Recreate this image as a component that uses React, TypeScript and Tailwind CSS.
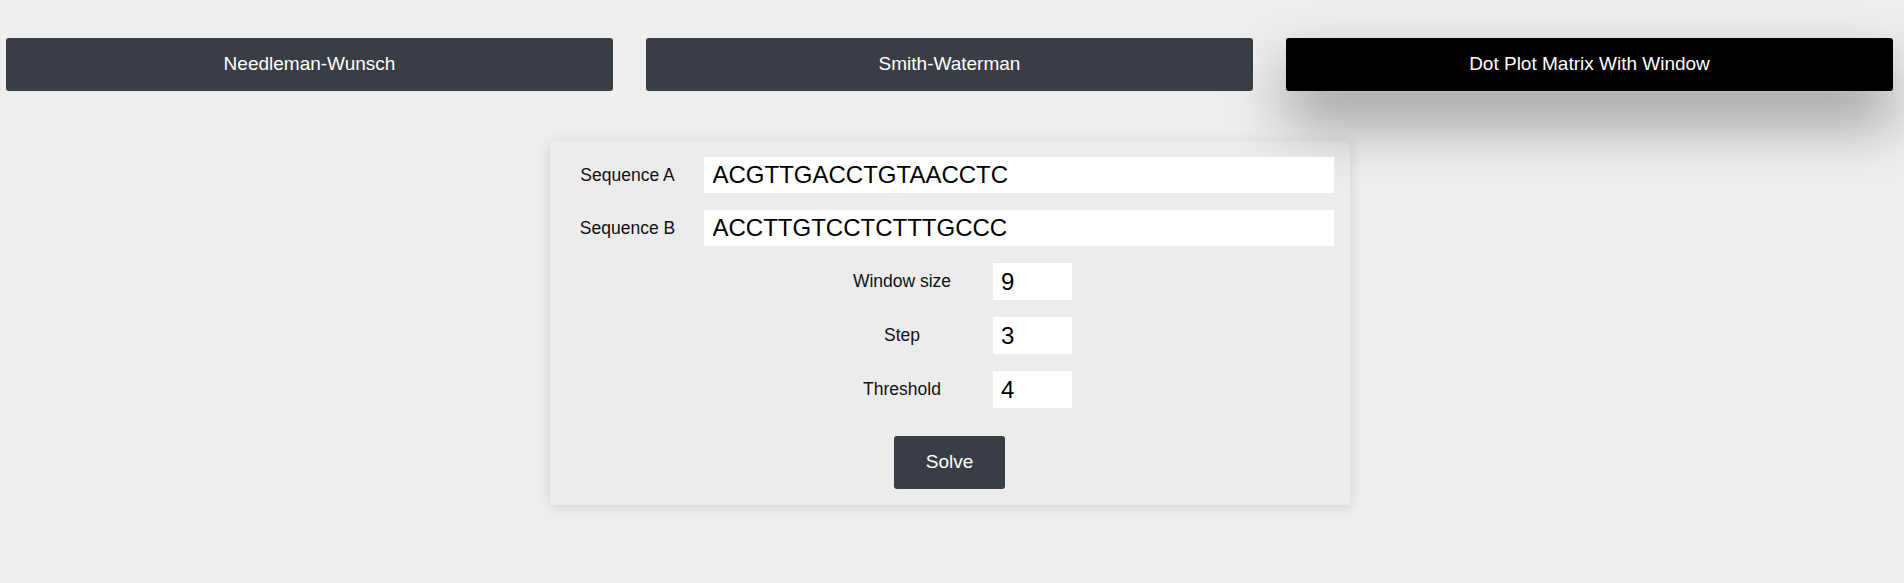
import React, { useState } from "react";

// Tabs at the top; the active one is black with a heavy drop shadow.
const ALGORITHMS = ["Needleman-Wunsch", "Smith-Waterman", "Dot Plot Matrix With Window"];

const NumberRow = ({ label, value }: { label: string; value: string }) => (
  <div className="flex items-center justify-center gap-[16px]">
    <label className="w-[150px] text-center text-[17.5px] text-[#111]">{label}</label>
    <input
      defaultValue={value}
      className="h-[37px] w-[79px] bg-white px-[8px] text-[24px] text-black outline-none"
    />
  </div>
);

const SequenceRow = ({ label, value }: { label: string; value: string }) => (
  <div className="flex items-center gap-[14px]">
    <label className="w-[124px] text-center text-[17.5px] text-[#111]">{label}</label>
    <input
      defaultValue={value}
      className="h-[36px] flex-1 bg-white px-[9px] text-[24px] text-black outline-none"
    />
  </div>
);

const App = () => {
  const [active, setActive] = useState(2);

  return (
    <div
      className="min-h-[583px] w-full bg-[#eeeeee] pl-[6px] pr-[11px] pt-[38px]"
      style={{ fontFamily: '"Liberation Sans", Arial, sans-serif' }}
    >
      <div className="grid grid-cols-3 gap-[33px]">
        {ALGORITHMS.map((name, i) => (
          <button
            key={name}
            onClick={() => setActive(i)}
            className={
              i === active
                ? "h-[53px] rounded-[3px] bg-black text-[19px] text-white shadow-[0_30px_60px_rgba(0,0,0,0.38)]"
                : "h-[53px] rounded-[3px] bg-[#393e46] text-[19px] text-white"
            }
          >
            {name}
          </button>
        ))}
      </div>

      <div className="mx-auto mt-[50px] flex w-[800px] flex-col gap-[17px] bg-[#ececec] px-4 py-4 shadow-[0_2px_12px_rgba(0,0,0,0.12)]">
        <SequenceRow label="Sequence A" value="ACGTTGACCTGTAACCTC" />
        <SequenceRow label="Sequence B" value="ACCTTGTCCTCTTTGCCC" />
        <NumberRow label="Window size" value="9" />
        <NumberRow label="Step" value="3" />
        <NumberRow label="Threshold" value="4" />
        <div className="mt-[11px] flex justify-center">
          <button className="h-[53px] w-[111px] rounded-[3px] bg-[#393e46] text-[19px] text-white">
            Solve
          </button>
        </div>
      </div>
    </div>
  );
};

export default App;
